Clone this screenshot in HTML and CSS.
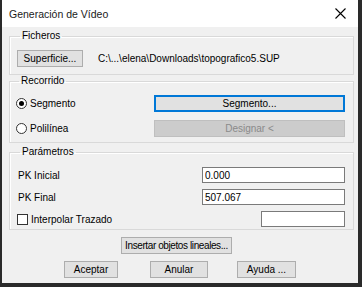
FILE: index.html
```html
<!DOCTYPE html>
<html lang="es">
<head>
    <meta charset="UTF-8">
    <title>Generación de Vídeo</title>
    <link rel="stylesheet" href="styles.css">
</head>
<body>
    <div class="dialog">
        <div class="titlebar">
            <span class="title">Generación de Vídeo</span>
            <svg class="close" width="11" height="11" viewBox="0 0 11 11">
                <path d="M0.5 0.5 L10.5 10.5 M10.5 0.5 L0.5 10.5" stroke="#000" stroke-width="1.1" fill="none"/>
            </svg>
        </div>

        <div class="content">
            <fieldset class="group group-files">
                <legend>Ficheros</legend>
                <div class="row-files">
                    <button class="btn btn-surface">Superficie...</button>
                    <span class="path">C:\...\elena\Downloads\topografico5.SUP</span>
                </div>
            </fieldset>

            <fieldset class="group group-route">
                <legend>Recorrido</legend>
                <div class="grid-route">
                    <label class="option"><input type="radio" name="route" checked>Segmento</label>
                    <button class="btn btn-wide btn-focus">Segmento...</button>
                    <label class="option"><input type="radio" name="route">Polilínea</label>
                    <button class="btn btn-wide" disabled>Designar &lt;</button>
                </div>
            </fieldset>

            <fieldset class="group group-params">
                <legend>Parámetros</legend>
                <div class="grid-params">
                    <span class="label">PK Inicial</span>
                    <input type="text" class="field" value="0.000">
                    <span class="label">PK Final</span>
                    <input type="text" class="field" value="507.067">
                    <label class="option"><input type="checkbox">Interpolar Trazado</label>
                    <input type="text" class="field field-short" value="">
                </div>
            </fieldset>

            <div class="row-insert">
                <button class="btn btn-insert">Insertar objetos lineales...</button>
            </div>

            <div class="row-actions">
                <button class="btn btn-ok">Aceptar</button>
                <button class="btn btn-cancel">Anular</button>
                <button class="btn btn-help">Ayuda ...</button>
            </div>
        </div>
    </div>
</body>
</html>
```

FILE: styles.css
```css
* {
    box-sizing: border-box;
}

body {
    margin: 0;
    background-color: #2a2a2a;
}

.dialog {
    width: 362px;
    height: 287px;
    border-left: 2px solid #2a2a2a;
    border-right: 4px solid #2a2a2a;
    border-bottom: 4px solid #2a2a2a;
    background-color: #f0f0f0;
    font-family: "Liberation Sans", Arial, sans-serif;
    font-size: 10px;
    color: #000;
    overflow: hidden;
}

/* barra de título */
.titlebar {
    height: 27px;
    background-color: #fff;
    display: flex;
    align-items: center;
    justify-content: space-between;
    padding: 0 12px 0 7px;
}

.title {
    font-size: 10.5px;
    color: #1a1a1a;
}

.close {
    display: block;
}

.content {
    padding: 2px 4px 0 7px;
}

/* cuadros de grupo */
.group {
    margin: 0;
    min-width: 0;
    border: 1px solid #d9d9d9;
    box-shadow: inset 1px 1px 0 #fff;
    padding: 0 8px 0 7px;
}

.group legend {
    line-height: 14px;
    padding: 0 2px;
    margin-left: 3px;
}

.group-files {
    padding-top: 7px;
    padding-bottom: 7px;
}

.group-route {
    margin-top: -1px;
    padding-top: 7px;
    padding-bottom: 5px;
    padding-left: 6px;
}

.group-params {
    margin-top: 2px;
    padding-top: 8px;
    padding-bottom: 2px;
}

.row-files {
    display: flex;
    align-items: center;
    gap: 15px;
}

.path {
    white-space: nowrap;
}

/* botones */
.btn {
    font-family: inherit;
    font-size: 10px;
    color: #000;
    height: 17px;
    padding: 0;
    white-space: nowrap;
    background-color: #e1e1e1;
    border: 1px solid #adadad;
    border-radius: 0;
}

.btn:disabled {
    background-color: #cccccc;
    border-color: #bfbfbf;
    color: #8a8a8a;
}

.btn-surface {
    width: 66px;
}

.btn-focus {
    border: 2px solid #0078d7;
}

.grid-route {
    display: grid;
    grid-template-columns: 1fr 191px;
    row-gap: 8px;
    align-items: center;
}

.btn-wide {
    width: 191px;
}

.option {
    display: flex;
    align-items: center;
    gap: 3px;
}

.option input {
    -webkit-appearance: none;
    appearance: none;
    margin: 0;
    background-color: #fff;
    border: 1px solid #333;
}

.option input[type="radio"] {
    width: 11px;
    height: 11px;
    border-radius: 50%;
    display: grid;
    place-items: center;
}

.option input[type="radio"]:checked::after {
    content: "";
    width: 5px;
    height: 5px;
    border-radius: 50%;
    background-color: #000;
}

.option input[type="checkbox"] {
    width: 11px;
    height: 11px;
}

.grid-params {
    display: grid;
    grid-template-columns: 1fr 143px;
    row-gap: 6px;
    align-items: center;
}

.label {
    padding-left: 1px;
}

.field {
    font-family: inherit;
    font-size: 10px;
    height: 16px;
    width: 143px;
    padding: 0 2px;
    border: 1px solid #7a7a7a;
    background-color: #fff;
    outline: none;
}

.field-short {
    width: 84px;
    justify-self: end;
}

.row-insert {
    display: flex;
    margin-top: 7px;
    padding-left: 112px;
}

.btn-insert {
    width: 111px;
    letter-spacing: -0.4px;
}

.row-actions {
    display: flex;
    margin-top: 7px;
    padding-left: 55px;
    gap: 32px;
}

.btn-ok {
    width: 54px;
}

.btn-cancel {
    width: 58px;
    margin-right: -3px;
}

.btn-help {
    width: 59px;
}
```
